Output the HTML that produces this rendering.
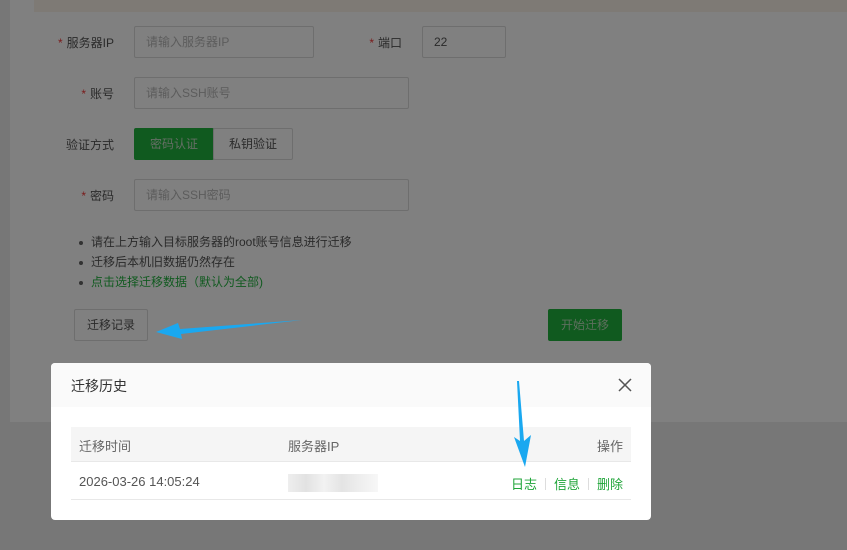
<!DOCTYPE html>
<html><head><meta charset="utf-8"><style>
*{box-sizing:border-box;margin:0;padding:0}
body{width:847px;height:550px;overflow:hidden;background:#777;font-family:"Liberation Sans","Noto Sans CJK SC",sans-serif;font-size:12px;color:#333;position:relative}
.abs{position:absolute}
.card{left:10px;top:0;width:837px;height:422px;background:#808080}
.strip{left:34px;top:0;width:813px;height:12px;background:#7e7a75}
.lbl{color:#2a2a2a;font-size:12px;text-align:right;width:80px}
.lbl b{color:#7a1a1a;font-weight:normal;margin-right:4px}
.inp{border:1px solid #6e6e6e;border-radius:2px;height:32px;background:#808080;color:#5c5c5c;padding-left:11px;line-height:30px;font-size:12px}
.btn{border:1px solid #6e6e6e;height:32px;line-height:30px;text-align:center;color:#2a2a2a;border-radius:2px}
.g{background:#105a1f;color:#666f66;border-color:#105a1f}
li{list-style:none;position:relative;padding-left:12px;height:20px;line-height:20px;color:#2a2a2a}
li:before{content:"";position:absolute;left:0;top:9px;width:4px;height:4px;border-radius:50%;background:#333}
.dlg{left:51px;top:363px;width:600px;height:157px;background:#fff;border-radius:4px;overflow:hidden;font-size:13px}
.sep{display:inline-block;width:1px;height:12px;background:#ddd;margin:0 8px;vertical-align:-1px}
</style></head><body>
<div class="abs card"></div>
<div class="abs strip"></div>
<div class="abs lbl" style="left:34px;top:34px"><b>*</b>服务器IP</div>
<div class="abs inp" style="left:134px;top:26px;width:180px">请输入服务器IP</div>
<div class="abs lbl" style="left:322px;top:34px"><b>*</b>端口</div>
<div class="abs inp" style="left:422px;top:26px;width:84px;color:#2a2a2a">22</div>
<div class="abs lbl" style="left:34px;top:85px"><b>*</b>账号</div>
<div class="abs inp" style="left:134px;top:77px;width:275px">请输入SSH账号</div>
<div class="abs lbl" style="left:34px;top:136px">验证方式</div>
<div class="abs btn g" style="left:134px;top:128px;width:80px">密码认证</div>
<div class="abs btn" style="left:213px;top:128px;width:80px">私钥验证</div>
<div class="abs lbl" style="left:34px;top:187px"><b>*</b>密码</div>
<div class="abs inp" style="left:134px;top:179px;width:275px">请输入SSH密码</div>
<ul class="abs" style="left:79px;top:232px">
<li>请在上方输入目标服务器的root账号信息进行迁移</li>
<li>迁移后本机旧数据仍然存在</li>
<li style="color:#105a1f">点击选择迁移数据（默认为全部)</li>
</ul>
<div class="abs btn" style="left:74px;top:309px;width:74px">迁移记录</div>
<div class="abs btn g" style="left:548px;top:309px;width:74px;color:#5e6f5e">开始迁移</div>
<svg class="abs" style="left:150px;top:315px" width="160" height="30"><path d="M152 5 L30 14 L28 8 L6 17 L32 24 L31 19 Z" fill="#1aa8f0"/></svg>
<div class="abs dlg">
 <div class="abs" style="left:0;top:0;width:600px;height:44px;background:#fafafa"></div>
 <div class="abs" style="left:20px;top:13px;font-size:14px;color:#333">迁移历史</div>
 <svg class="abs" style="left:566px;top:14px" width="16" height="16"><path d="M2 2L14 14M14 2L2 14" stroke="#555" stroke-width="1.5"/></svg>
 <div class="abs" style="left:20px;top:64px;width:560px;height:35px;background:#f5f5f5;border-bottom:1px solid #e8e8e8"></div>
 <div class="abs" style="left:28px;top:73px;color:#666">迁移时间</div>
 <div class="abs" style="left:237px;top:73px;color:#666">服务器IP</div>
 <div class="abs" style="left:546px;top:73px;color:#666">操作</div>
 <div class="abs" style="left:20px;top:136px;width:560px;height:1px;background:#e8e8e8"></div>
 <div class="abs" style="left:28px;top:111px;color:#555">2026-03-26 14:05:24</div>
 <div class="abs" style="left:237px;top:111px;width:90px;height:18px;background:linear-gradient(90deg,#eee,#e2e2e2 20%,#f2f2f2 40%,#e4e4e4 60%,#eee 80%,#f7f7f7)"></div>
 <div class="abs" style="left:460px;top:111px;width:112px;text-align:right;color:#20a53a;white-space:nowrap">日志<span class="sep"></span>信息<span class="sep"></span>删除</div>
 <svg class="abs" style="left:455px;top:18px" width="30" height="88"><path d="M11 0 L13 0 L18 60 L25 54 L19 86 L8 56 L14 60 Z" fill="#1aa8f0"/></svg>
</div>
</body></html>
